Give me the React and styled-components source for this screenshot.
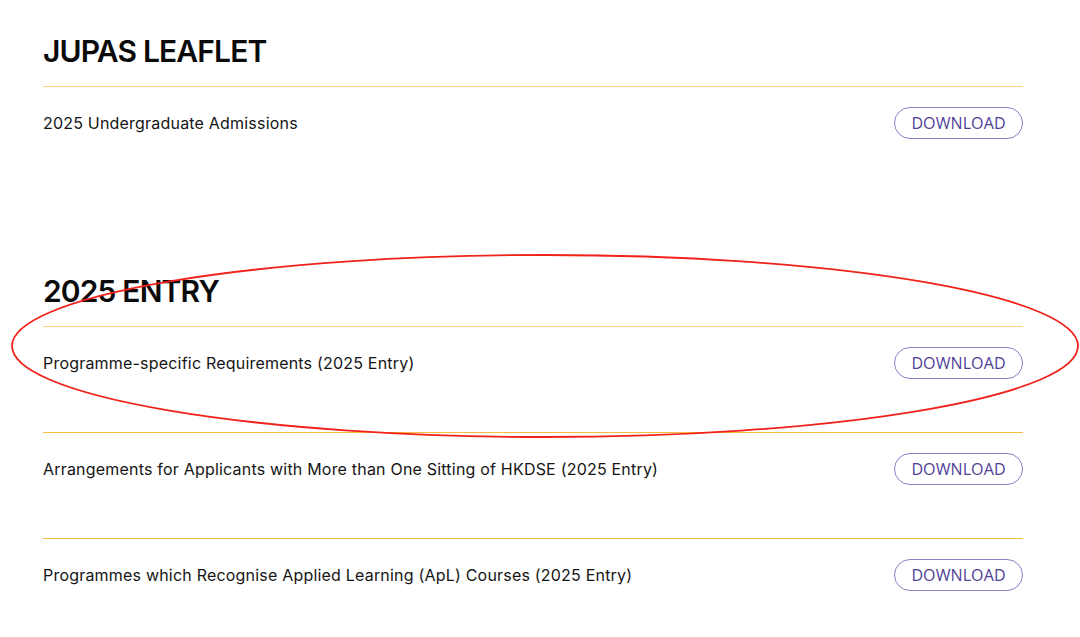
import React from "react";
import styled, { createGlobalStyle } from "styled-components";

const Global = createGlobalStyle`
  html, body { margin: 0; padding: 0; background: #fff; }
  body { font-family: Inter, "Noto Sans", sans-serif; color: #111; }
`;

const Page = styled.div`
  position: relative;
  width: 1080px;
  height: 637px;
  overflow: hidden;
  padding: 33px 0 0 43px;
  box-sizing: border-box;
`;

const Content = styled.div`
  width: 980px;
  display: flex;
  flex-direction: column;
  gap: 81px;
`;

const Section = styled.section`
  display: flex;
  flex-direction: column;
`;

const Heading = styled.h2`
  margin: 0;
  font-family: Inter, sans-serif;
  font-size: 30px;
  line-height: 36px;
  font-weight: 600;
  letter-spacing: -0.85px;
  color: #0a0a0a;
  padding-bottom: 17px;
  border-bottom: 1px solid #ffd27f;
`;

const Row = styled.div`
  display: flex;
  align-items: flex-start;
  justify-content: space-between;
  padding-top: 20px;
  border-top-style: solid;
  border-top-width: ${(p) => (p.$first ? "0" : "1px")};
  border-top-color: #f9bb40;
  height: ${(p) => (p.$first ? "105px" : "106px")};
  box-sizing: border-box;
`;

const Title = styled.div`
  font-family: Inter, sans-serif;
  font-size: 16px;
  line-height: 32px;
  letter-spacing: 0.2px;
  color: #151515;
`;

const Button = styled.button`
  width: 129px;
  height: 32px;
  box-sizing: border-box;
  border: 1px solid #8b80c2;
  border-radius: 16px;
  background: #fff;
  color: #4f4196;
  font-family: "Open Sans", "Noto Sans", sans-serif;
  font-size: 16px;
  letter-spacing: 0.1px;
  padding: 0;
  display: flex;
  align-items: center;
  justify-content: center;
  cursor: pointer;
`;

const Annotation = styled.svg`
  position: absolute;
  left: 0;
  top: 0;
  pointer-events: none;
`;

const sections = [
  { title: "JUPAS LEAFLET", items: ["2025 Undergraduate Admissions"] },
  {
    title: "2025 ENTRY",
    items: [
      "Programme-specific Requirements (2025 Entry)",
      "Arrangements for Applicants with More than One Sitting of HKDSE (2025 Entry)",
      "Programmes which Recognise Applied Learning (ApL) Courses (2025 Entry)",
    ],
  },
];

export default function App() {
  return (
    <>
      <Global />
      <Page>
        <Content>
          {sections.map((s) => (
            <Section key={s.title}>
              <Heading>{s.title}</Heading>
              {s.items.map((it, i) => (
                <Row key={it} $first={i === 0}>
                  <Title>{it}</Title>
                  <Button>DOWNLOAD</Button>
                </Row>
              ))}
            </Section>
          ))}
        </Content>
        <Annotation width="1080" height="637" viewBox="0 0 1080 637">
          <ellipse
            cx="545"
            cy="346"
            rx="533"
            ry="91"
            fill="none"
            stroke="#f0221a"
            strokeWidth="1.8"
          />
        </Annotation>
      </Page>
    </>
  );
}
